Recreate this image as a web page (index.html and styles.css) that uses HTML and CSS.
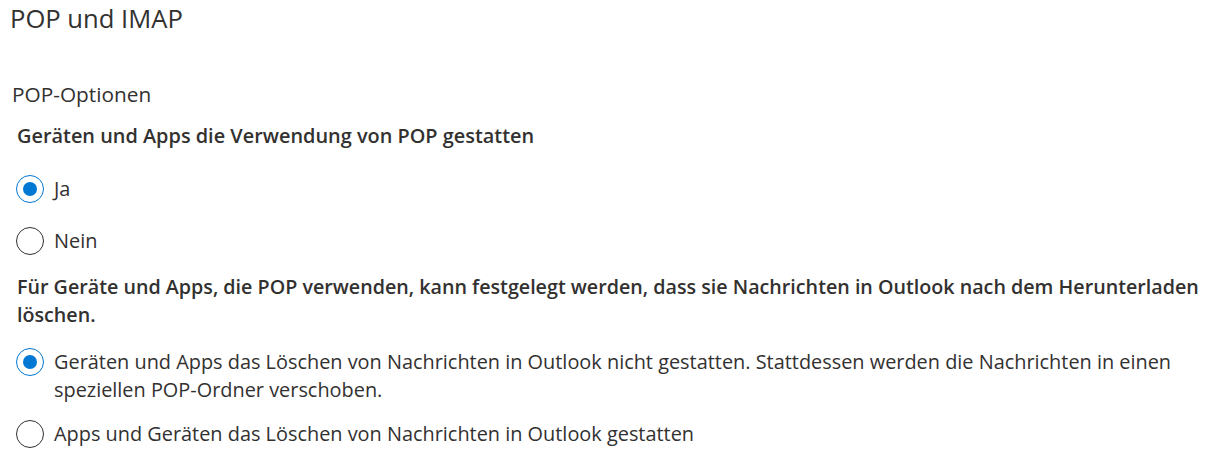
FILE: index.html
```html
<!DOCTYPE html>
<html lang="de">
<head>
<meta charset="utf-8">
<title>POP und IMAP</title>
<link rel="stylesheet" href="styles.css">
</head>
<body>
<div class="page">
  <h1 class="title">POP und IMAP</h1>
  <h2 class="section">POP-Optionen</h2>
  <div class="group">
    <div class="label">Geräten und Apps die Verwendung von POP gestatten</div>
    <div class="options">
      <label class="option"><span class="radio checked"></span><span class="text">Ja</span></label>
      <label class="option"><span class="radio"></span><span class="text">Nein</span></label>
    </div>
  </div>
  <div class="group">
    <div class="label para">Für Geräte und Apps, die POP verwenden, kann festgelegt werden, dass sie Nachrichten in Outlook nach dem Herunterladen löschen.</div>
    <div class="options tight">
      <label class="option"><span class="radio checked"></span><span class="text">Geräten und Apps das Löschen von Nachrichten in Outlook nicht gestatten. Stattdessen werden die Nachrichten in einen speziellen POP-Ordner verschoben.</span></label>
      <label class="option"><span class="radio"></span><span class="text">Apps und Geräten das Löschen von Nachrichten in Outlook gestatten</span></label>
    </div>
  </div>
</div>
</body>
</html>
```

FILE: styles.css
```css
html, body {
  margin: 0;
  padding: 0;
  background: #ffffff;
}
body {
  font-family: "Open Sans", "Noto Sans", sans-serif;
  color: #323130;
}
.page {
  padding: 0 0 0 10px;
  width: 1209px;
  box-sizing: border-box;
}
.title {
  margin: 0;
  padding-top: 2px;
  font-size: 25.6px;
  font-weight: 400;
  line-height: 34px;
}
.section {
  margin: 44px 0 0 0;
  padding-left: 2px;
  font-size: 20.8px;
  font-weight: 400;
  line-height: 28px;
}
.group {
  padding-left: 7px;
}
.label {
  margin-top: 14px;
  font-size: 19.9px;
  font-weight: 600;
  line-height: 28px;
}
.label.para {
  margin-top: 18px;
  font-size: 19.7px;
}
.options {
  display: flex;
  flex-direction: column;
  gap: 24px;
  padding-top: 25px;
  margin-left: -1px;
}
.options.tight {
  gap: 16px;
  padding-top: 19px;
}
.option {
  display: flex;
  align-items: flex-start;
  gap: 10px;
  font-size: 19.9px;
  line-height: 28px;
}
.radio {
  flex: none;
  width: 28px;
  height: 28px;
  box-sizing: border-box;
  border: 1.4px solid #323130;
  border-radius: 50%;
  display: flex;
  align-items: center;
  justify-content: center;
}
.radio.checked {
  border-color: #0078d4;
}
.radio.checked::after {
  content: "";
  width: 14px;
  height: 14px;
  border-radius: 50%;
  background: #0078d4;
}
```
